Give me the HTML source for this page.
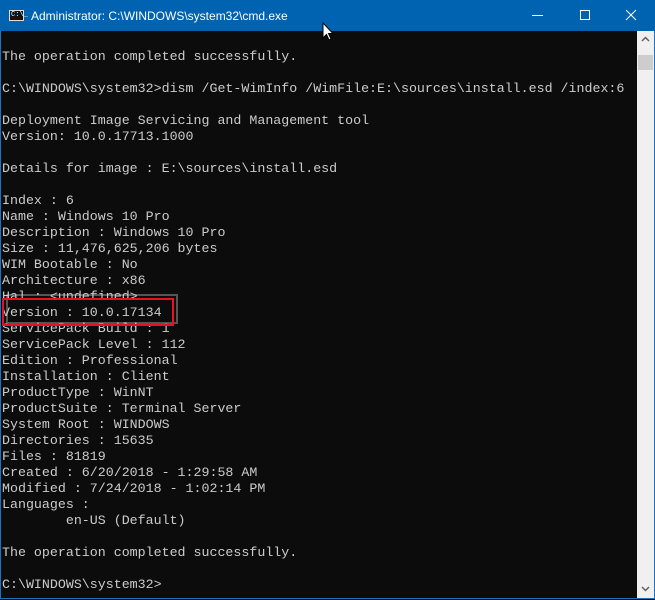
<!DOCTYPE html>
<html><head><style>
html,body{margin:0;padding:0;width:655px;height:600px;overflow:hidden;background:#0c0c0c;}
#win{position:absolute;left:0;top:0;width:653px;height:598px;border:1px solid #1a73c6;border-top:none;background:#0c0c0c;}
#title{position:absolute;left:0;top:0;width:655px;height:31px;background:#0063b1;color:#fff;font:12px "Liberation Sans",sans-serif;}
#title .t{position:absolute;left:31px;top:9px;}
#icon{position:absolute;left:9px;top:10px;width:15px;height:11px;background:#111;border:1px solid #ddd;box-sizing:border-box;}
#icon span{position:absolute;left:1px;top:0px;font:7px "Liberation Mono",monospace;color:#fff;line-height:9px;}
pre{position:absolute;left:2px;top:49px;margin:0;font:13.3px/16px "Liberation Mono",monospace;color:#cccccc;}
#sb{position:absolute;left:637px;top:31px;width:17px;height:567px;background:#f0f0f0;}
#thumb{position:absolute;left:638px;top:55px;width:15px;height:15px;background:#cdcdcd;}
.red{position:absolute;left:2px;top:298px;width:168px;height:24px;border:2px solid #e81123;}
.sh{position:absolute;left:6px;top:294px;width:168px;height:26px;border:2px solid #555;}
</style></head><body>
<div id="win"></div>
<div id="title"><div id="icon"><span>C:\_</span></div><div class="t">Administrator: C:\WINDOWS\system32\cmd.exe</div>
<svg style="position:absolute;left:530px;top:8px" width="16" height="16"><path d="M2 7.5H13" stroke="#fff" stroke-width="1"/></svg>
<svg style="position:absolute;left:578px;top:8px" width="16" height="16"><rect x="2.5" y="2.5" width="9" height="9" fill="none" stroke="#fff"/></svg>
<svg style="position:absolute;left:624px;top:8px" width="16" height="16"><path d="M2 2L12 12M12 2L2 12" stroke="#fff"/></svg>
</div>
<div class="sh"></div>
<pre>The operation completed successfully.

C:\WINDOWS\system32>dism /Get-WimInfo /WimFile:E:\sources\install.esd /index:6

Deployment Image Servicing and Management tool
Version: 10.0.17713.1000

Details for image : E:\sources\install.esd

Index : 6
Name : Windows 10 Pro
Description : Windows 10 Pro
Size : 11,476,625,206 bytes
WIM Bootable : No
Architecture : x86
Hal : &lt;undefined&gt;
Version : 10.0.17134
ServicePack Build : 1
ServicePack Level : 112
Edition : Professional
Installation : Client
ProductType : WinNT
ProductSuite : Terminal Server
System Root : WINDOWS
Directories : 15635
Files : 81819
Created : 6/20/2018 - 1:29:58 AM
Modified : 7/24/2018 - 1:02:14 PM
Languages :
        en-US (Default)

The operation completed successfully.

C:\WINDOWS\system32&gt;
</pre>
<div class="red"></div>
<div id="sb">
<svg style="position:absolute;left:4px;top:5px" width="9" height="6"><path d="M1 5L4.5 1.5L8 5" stroke="#606060" stroke-width="1.5" fill="none"/></svg>
<svg style="position:absolute;left:4px;top:555px" width="9" height="6"><path d="M1 1L4.5 4.5L8 1" stroke="#606060" stroke-width="1.5" fill="none"/></svg>
</div>
<div id="thumb"></div>
<svg style="position:absolute;left:322px;top:22px" width="12" height="20"><path d="M1 1V16L4.5 12.5L7 18L9 17L6.5 11.5H11Z" fill="#fff" stroke="#000"/></svg>
</body></html>
